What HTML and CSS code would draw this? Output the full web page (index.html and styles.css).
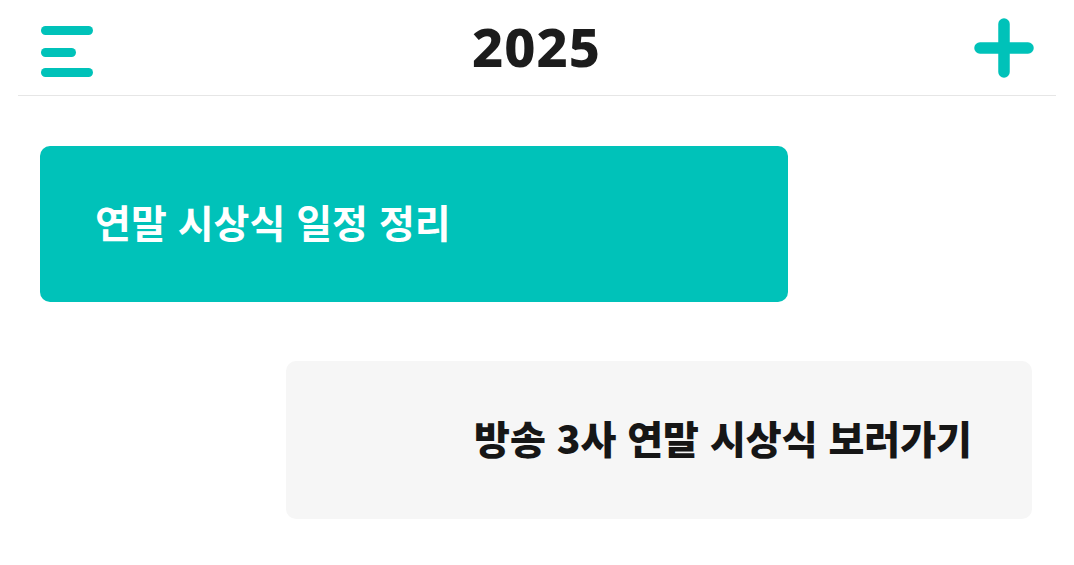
FILE: index.html
```html
<!DOCTYPE html>
<html lang="ko">
<head>
  <meta charset="UTF-8" />
  <meta name="viewport" content="width=device-width, initial-scale=1.0"/>
  <title>2025</title>
  <link rel="stylesheet" href="styles.css">
</head>
<body>
  <header class="topbar">
    <button class="icon-btn menu-btn" aria-label="메뉴">
      <svg width="52" height="52" viewBox="0 0 52 52">
        <g stroke="#00c2b9" stroke-width="9" stroke-linecap="round">
          <line x1="4.5" y1="4.5" x2="47.5" y2="4.5" />
          <line x1="4.5" y1="26.5" x2="30.5" y2="26.5" />
          <line x1="4.5" y1="46.5" x2="47.5" y2="46.5" />
        </g>
      </svg>
    </button>
    <h1 class="title">2025</h1>
    <button class="icon-btn" aria-label="추가">
      <svg width="60" height="60" viewBox="0 0 60 60">
        <g stroke="#00c2b9" stroke-width="11.5" stroke-linecap="round">
          <line x1="30" y1="6" x2="30" y2="54" />
          <line x1="6" y1="30" x2="54" y2="30" />
        </g>
      </svg>
    </button>
  </header>

  <main class="thread">
    <div class="bubble bubble-main">연말 시상식 일정 정리</div>
    <div class="bubble bubble-sub">방송 3사 연말 시상식 보러가기</div>
  </main>
</body>
</html>
```

FILE: styles.css
```css
body { margin: 0; background: #fff; font-family: "Noto Sans CJK KR", "Noto Sans", sans-serif; }
.topbar { display: flex; align-items: center; justify-content: space-between; height: 95px; margin: 0 18px; padding: 0 22px 0 23px; border-bottom: 1.5px solid #e6e6e6; }
.icon-btn { border: 0; background: none; padding: 0; display: flex; cursor: pointer; }
.menu-btn { margin-top: 8px; }
.title { margin: 0 0 4px 6px; font-family: "Noto Sans", sans-serif; font-weight: 800; font-size: 54px; color: #1c1c1c; letter-spacing: 1px; }
.thread { display: flex; flex-direction: column; padding: 50px 42px 0 40px; }
.bubble { display: flex; align-items: center; box-sizing: border-box; padding-bottom: 6px; font-weight: 700; font-size: 39px; border-radius: 10px; }
.bubble-main { width: 748px; height: 156px; padding-left: 55px; background: #00c2b9; color: #fff; }
.bubble-sub { align-self: flex-end; justify-content: flex-end; width: 746px; height: 158px; margin-top: 59px; padding-right: 60px; background: #f6f6f6; color: #161616; font-weight: 900; }
```
